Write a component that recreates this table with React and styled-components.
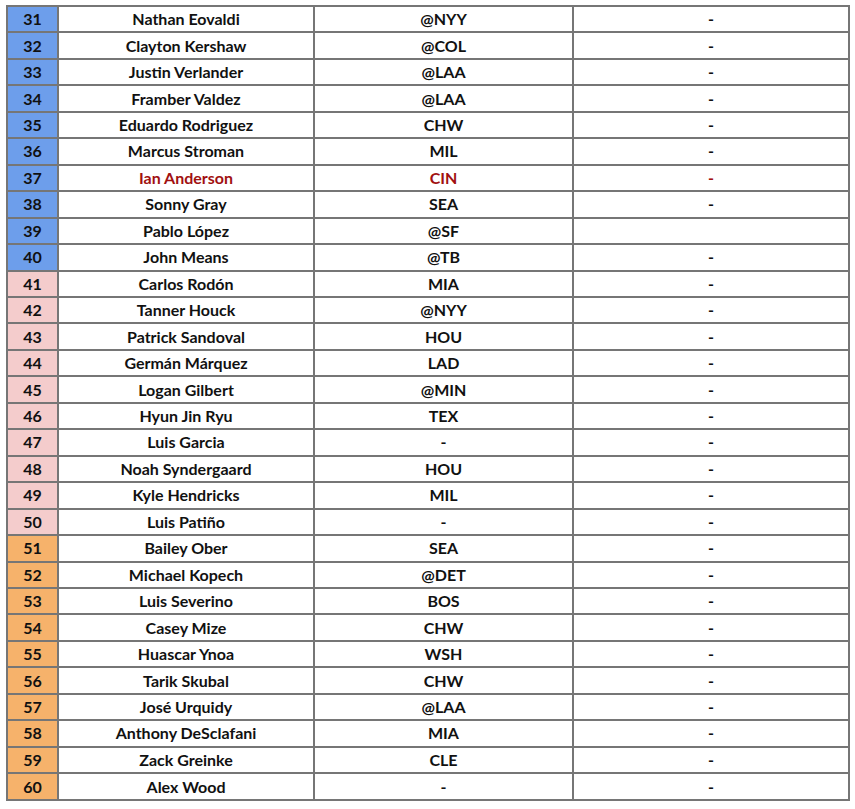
import React from "react";
import styled, { createGlobalStyle } from "styled-components";

const GlobalStyle = createGlobalStyle`
  body {
    margin: 0;
    background: #fff;
  }
`;

const Page = styled.div`
  padding: 5px 6px 9px 6px;
  font-family: "Lato", "Liberation Sans", sans-serif;
`;

const Table = styled.table`
  width: 842px;
  height: 796px;
  border-collapse: collapse;
  table-layout: fixed;
  border: 2px solid #767676;
`;

const Col = styled.col`
  width: ${(p) => p.$w}px;
`;

const Cell = styled.td`
  border: 2px solid #767676;
  padding: 0;
  text-align: center;
  vertical-align: middle;
  font-size: 16px;
  font-weight: 700;
  line-height: 1;
  color: ${(p) => (p.$red ? "#a11010" : "#111")};
  white-space: nowrap;
`;

const RankCell = styled(Cell)`
  background: ${(p) => p.$tier};
  color: #111;
`;

const tiers = {
  blue: "#6d9eeb",
  pink: "#f4cccc",
  orange: "#f6b26b",
};

const rows = [
  ["Nathan Eovaldi", "@NYY", "-"],
  ["Clayton Kershaw", "@COL", "-"],
  ["Justin Verlander", "@LAA", "-"],
  ["Framber Valdez", "@LAA", "-"],
  ["Eduardo Rodriguez", "CHW", "-"],
  ["Marcus Stroman", "MIL", "-"],
  ["Ian Anderson", "CIN", "-"],
  ["Sonny Gray", "SEA", "-"],
  ["Pablo López", "@SF", ""],
  ["John Means", "@TB", "-"],
  ["Carlos Rodón", "MIA", "-"],
  ["Tanner Houck", "@NYY", "-"],
  ["Patrick Sandoval", "HOU", "-"],
  ["Germán Márquez", "LAD", "-"],
  ["Logan Gilbert", "@MIN", "-"],
  ["Hyun Jin Ryu", "TEX", "-"],
  ["Luis Garcia", "-", "-"],
  ["Noah Syndergaard", "HOU", "-"],
  ["Kyle Hendricks", "MIL", "-"],
  ["Luis Patiño", "-", "-"],
  ["Bailey Ober", "SEA", "-"],
  ["Michael Kopech", "@DET", "-"],
  ["Luis Severino", "BOS", "-"],
  ["Casey Mize", "CHW", "-"],
  ["Huascar Ynoa", "WSH", "-"],
  ["Tarik Skubal", "CHW", "-"],
  ["José Urquidy", "@LAA", "-"],
  ["Anthony DeSclafani", "MIA", "-"],
  ["Zack Greinke", "CLE", "-"],
  ["Alex Wood", "-", "-"],
];

function tierFor(rank) {
  if (rank <= 40) return tiers.blue;
  if (rank <= 50) return tiers.pink;
  return tiers.orange;
}

export default function App() {
  return (
    <Page>
      <GlobalStyle />
      <Table>
        <colgroup>
          <Col $w={51} />
          <Col $w={256} />
          <Col $w={259} />
          <Col $w={276} />
        </colgroup>
        <tbody>
          {rows.map(([name, opp, last], i) => {
            const rank = 31 + i;
            const red = rank === 37;
            return (
              <tr key={rank}>
                <RankCell $tier={tierFor(rank)}>{rank}</RankCell>
                <Cell $red={red}>{name}</Cell>
                <Cell $red={red}>{opp}</Cell>
                <Cell $red={red}>{last}</Cell>
              </tr>
            );
          })}
        </tbody>
      </Table>
    </Page>
  );
}
